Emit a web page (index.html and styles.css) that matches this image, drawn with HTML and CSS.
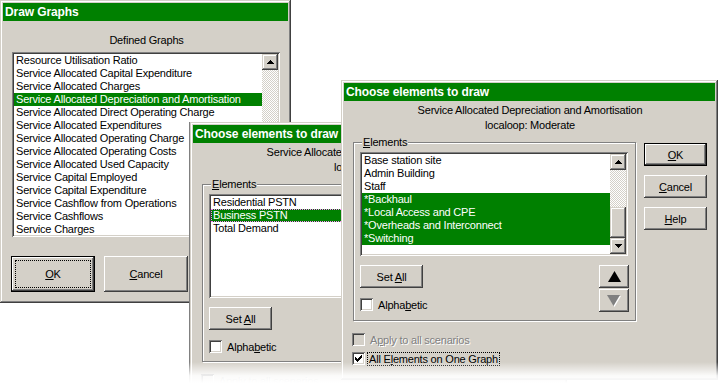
FILE: index.html
```html
<!DOCTYPE html>
<html lang="en">
<head>
  <meta charset="UTF-8">
  <title>Draw Graphs</title>
  <link rel="stylesheet" href="styles.css">
</head>
<body>

  <div class="desktop">

    <!-- Draw Graphs -->
    <div class="window win-graphs">
      <div class="titlebar">Draw Graphs</div>
      <div class="graphs-body">
        <div class="caption">Defined Graphs</div>
        <div class="listbox graphs-list">
          <div class="list-items">
            <div class="item">Resource Utilisation Ratio</div>
            <div class="item">Service Allocated Capital Expenditure</div>
            <div class="item">Service Allocated Charges</div>
            <div class="item selected">Service Allocated Depreciation and Amortisation</div>
            <div class="item">Service Allocated Direct Operating Charge</div>
            <div class="item">Service Allocated Expenditures</div>
            <div class="item">Service Allocated Operating Charge</div>
            <div class="item">Service Allocated Operating Costs</div>
            <div class="item">Service Allocated Used Capacity</div>
            <div class="item">Service Capital Employed</div>
            <div class="item">Service Capital Expenditure</div>
            <div class="item">Service Cashflow from Operations</div>
            <div class="item">Service Cashflows</div>
            <div class="item">Service Charges</div>
          </div>
          <div class="scrollbar">
            <div class="sb-btn"><svg width="7" height="4" viewBox="0 0 7 4"><path d="M3 0h1v1h1v1h1v1h1v1h-7v-1h1v-1h1v-1h1z"/></svg></div>
            <div class="sb-track"></div>
          </div>
        </div>
        <div class="button-row">
          <button class="btn btn-default btn-big focused"><span><u>O</u>K</span></button>
          <button class="btn btn-big"><span><u>C</u>ancel</span></button>
        </div>
      </div>
    </div>

    <!-- Choose elements (first) -->
    <div class="window win-small">
      <div class="titlebar">Choose elements to draw</div>
      <div class="choose-body">
        <div class="subtitle">Service Allocated Depreciation and Amortisation</div>
        <div class="subtitle">localoop: Moderate</div>
        <div class="choose-row">
          <div class="choose-left">
            <div class="groupbox">
              <div class="group-label"><u>E</u>lements</div>
              <div class="listbox elements-list">
                <div class="list-items">
                  <div class="item">Residential PSTN</div>
                  <div class="item selected focus-item">Business PSTN</div>
                  <div class="item">Total Demand</div>
                </div>
              </div>
              <div class="group-controls">
                <div>
                  <button class="btn btn-small"><span>Set <u>A</u>ll</span></button>
                  <div class="check-row">
                    <span class="checkbox"></span>
                    <span>Alpha<u>b</u>etic</span>
                  </div>
                </div>
              </div>
            </div>
            <div class="check-row options-first disabled">
              <span class="checkbox"></span>
              <span>A<u>p</u>ply to all scenarios</span>
            </div>
          </div>
        </div>
      </div>
    </div>

    <!-- Choose elements (front) -->
    <div class="window win-main">
      <div class="titlebar">Choose elements to draw</div>
      <div class="choose-body">
        <div class="subtitle">Service Allocated Depreciation and Amortisation</div>
        <div class="subtitle">localoop: Moderate</div>
        <div class="choose-row">
          <div class="choose-left">
            <div class="groupbox">
              <div class="group-label"><u>E</u>lements</div>
              <div class="listbox elements-list">
                <div class="list-items">
                  <div class="item">Base station site</div>
                  <div class="item">Admin Building</div>
                  <div class="item">Staff</div>
                  <div class="item selected">*Backhaul</div>
                  <div class="item selected">*Local Access and CPE</div>
                  <div class="item selected">*Overheads and Interconnect</div>
                  <div class="item selected">*Switching</div>
                </div>
                <div class="scrollbar">
                  <div class="sb-btn"><svg width="7" height="4" viewBox="0 0 7 4"><path d="M3 0h1v1h1v1h1v1h1v1h-7v-1h1v-1h1v-1h1z"/></svg></div>
                  <div class="sb-track"></div>
                  <div class="sb-thumb"></div>
                  <div class="sb-btn"><svg width="7" height="4" viewBox="0 0 7 4"><path d="M0 0h7v1h-1v1h-1v1h-1v1h-1v-1h-1v-1h-1v-1h-1z"/></svg></div>
                </div>
              </div>
              <div class="group-controls">
                <div>
                  <button class="btn btn-small"><span>Set <u>A</u>ll</span></button>
                  <div class="check-row">
                    <span class="checkbox"></span>
                    <span>Alpha<u>b</u>etic</span>
                  </div>
                </div>
                <div class="arrows">
                  <button class="btn arrow-btn">
                    <svg width="13" height="11" viewBox="0 0 13 11"><polygon points="6.5,0 13,11 0,11" fill="#000"/></svg>
                  </button>
                  <button class="btn arrow-btn">
                    <svg width="14" height="12" viewBox="0 0 14 12">
                      <polygon points="1,1 14,1 7.5,12" fill="#fff"/>
                      <polygon points="0,0 13,0 6.5,11" fill="#808080"/>
                    </svg>
                  </button>
                </div>
              </div>
            </div>
            <div class="check-row options-first disabled">
              <span class="checkbox"></span>
              <span>A<u>p</u>ply to all scenarios</span>
            </div>
            <div class="check-row options-next">
              <span class="checkbox">
                <svg width="7" height="7" viewBox="0 0 7 7"><path d="M0 2v3h1v1h1v1h1v-1h1v-1h1v-1h1v-1h1v-3h-1v1h-1v1h-1v1h-1v1h-1v-1h-1v-1h-1z"/></svg>
              </span>
              <span class="focus-label">All E<u>l</u>ements on One Graph</span>
            </div>
          </div>
          <div class="choose-buttons">
            <button class="btn btn-default btn-small"><span><u>O</u>K</span></button>
            <button class="btn btn-small"><span><u>C</u>ancel</span></button>
            <button class="btn btn-small"><span><u>H</u>elp</span></button>
          </div>
        </div>
      </div>
    </div>

    <div class="fade"></div>
  </div>

</body>
</html>
```

FILE: styles.css
```css
body {
  margin: 0;
  background: #fff;
  font-family: "Liberation Sans", Arial, sans-serif;
  font-size: 11px;
  letter-spacing: -0.2px;
  color: #000;
}

.desktop {
  position: relative;
  width: 719px;
  height: 383px;
  overflow: hidden;
}

/* windows */
.window {
  position: absolute;
  box-sizing: border-box;
  padding: 3px;
  background: #d4d0c8;
  box-shadow: inset -1px -1px #404040, inset 1px 1px #d4d0c8, inset -2px -2px #808080, inset 2px 2px #fff;
}

.win-graphs {
  left: 0;
  top: 0;
  width: 291px;
  height: 303px;
}

.win-small {
  left: 190px;
  top: 122px;
  width: 377px;
  height: 300px;
  box-shadow: -1px 0 #808080, inset -1px -1px #404040, inset 1px 1px #d4d0c8, inset -2px -2px #808080, inset 2px 2px #fff;
}

.win-main {
  left: 341px;
  top: 80px;
  width: 377px;
  height: 300px;
}

.titlebar {
  height: 18px;
  line-height: 18px;
  padding-left: 2px;
  background: #008000;
  color: #fff;
  font-size: 12px;
  font-weight: bold;
  letter-spacing: -0.1px;
  white-space: nowrap;
  overflow: hidden;
}

/* draw graphs */
.graphs-body {
  padding: 12px 7px 0 9px;
}

.caption {
  line-height: 14px;
  text-align: center;
}

.graphs-list {
  width: 268px;
  height: 185px;
  margin-top: 5px;
}

.button-row {
  display: flex;
  gap: 9px;
  margin: 19px 0 0 -1px;
}

/* list boxes */
.listbox {
  display: flex;
  box-sizing: border-box;
  padding: 2px;
  background: #fff;
  box-shadow: inset 1px 1px #808080, inset -1px -1px #fff, inset 2px 2px #404040, inset -2px -2px #d4d0c8;
}

.list-items {
  flex: 1;
  overflow: hidden;
}

.item {
  box-sizing: border-box;
  height: 13px;
  line-height: 13px;
  padding-left: 2px;
  white-space: nowrap;
}

.item.selected {
  background: #008000;
  color: #fff;
}

.item.focus-item {
  outline: 1px dotted #ff80ff;
  outline-offset: -1px;
}

.scrollbar {
  width: 16px;
  display: flex;
  flex-direction: column;
  background: repeating-conic-gradient(#fff 0 25%, #d4d0c8 0 50%) 0 0 / 2px 2px;
}

.sb-btn,
.sb-thumb {
  background: #d4d0c8;
  box-shadow: inset -1px -1px #404040, inset 1px 1px #d4d0c8, inset -2px -2px #808080, inset 2px 2px #fff;
}

.sb-btn {
  height: 16px;
  display: flex;
  align-items: center;
  justify-content: center;
}

.sb-track {
  flex: 1;
}

.sb-thumb {
  height: 31px;
}

/* buttons */
.btn {
  position: relative;
  box-sizing: border-box;
  display: flex;
  align-items: center;
  justify-content: center;
  padding: 0;
  border: 0;
  background: #d4d0c8;
  color: #000;
  font: inherit;
  letter-spacing: inherit;
  box-shadow: inset -1px -1px #404040, inset 1px 1px #fff, inset -2px -2px #808080, inset 2px 2px #d4d0c8;
}

.btn-default {
  box-shadow: inset 0 0 0 1px #000, inset -2px -2px #404040, inset 2px 2px #fff, inset -3px -3px #808080;
}

.btn.focused::after {
  content: "";
  position: absolute;
  inset: 4px;
  border: 1px dotted #000;
}

.btn-big {
  width: 84px;
  height: 36px;
}

.btn-small {
  width: 63px;
  height: 23px;
}

/* choose elements */
.choose-body {
  padding: 2px 8px 0 9px;
}

.subtitle {
  line-height: 15px;
  text-align: center;
  white-space: nowrap;
}

.choose-row {
  display: flex;
  gap: 8px;
  margin-top: 9px;
}

.choose-left {
  width: 283px;
  flex: none;
}

.groupbox {
  position: relative;
  border: 1px solid #808080;
  box-shadow: inset 1px 1px #fff, 1px 1px #fff;
  padding: 9px 7px 8px 6px;
}

.group-label {
  position: absolute;
  top: -7px;
  left: 8px;
  padding: 0 1px;
  line-height: 13px;
  background: #d4d0c8;
}

.elements-list {
  height: 104px;
}

.group-controls {
  display: flex;
  justify-content: space-between;
  margin-top: 9px;
}

.arrows {
  display: flex;
  flex-direction: column;
  gap: 1px;
  margin-right: -1px;
}

.arrow-btn {
  width: 30px;
  height: 23px;
}

.check-row {
  display: flex;
  align-items: center;
  gap: 5px;
  height: 13px;
  margin-top: 10px;
  white-space: nowrap;
}

.checkbox {
  box-sizing: border-box;
  width: 13px;
  height: 13px;
  flex: none;
  display: flex;
  align-items: center;
  justify-content: center;
  background: #fff;
  box-shadow: inset 1px 1px #808080, inset -1px -1px #fff, inset 2px 2px #404040, inset -2px -2px #d4d0c8;
}

.options-first {
  margin: 12px 0 0 -1px;
}

.options-next {
  margin: 6px 0 0 -1px;
}

.disabled {
  color: #808080;
  text-shadow: 1px 1px #fff;
}

.disabled .checkbox {
  background: #d4d0c8;
}

.focus-label {
  margin-left: -2px;
  padding: 0 1px;
  outline: 1px dotted #000;
}

.choose-buttons {
  display: flex;
  flex-direction: column;
  gap: 9px;
  padding-top: 1px;
}

.fade {
  position: absolute;
  left: 0;
  right: 0;
  top: 362px;
  height: 21px;
  background: linear-gradient(to bottom, rgba(255, 255, 255, 0), rgba(255, 255, 255, 0.9) 65%, #fff);
}
```
